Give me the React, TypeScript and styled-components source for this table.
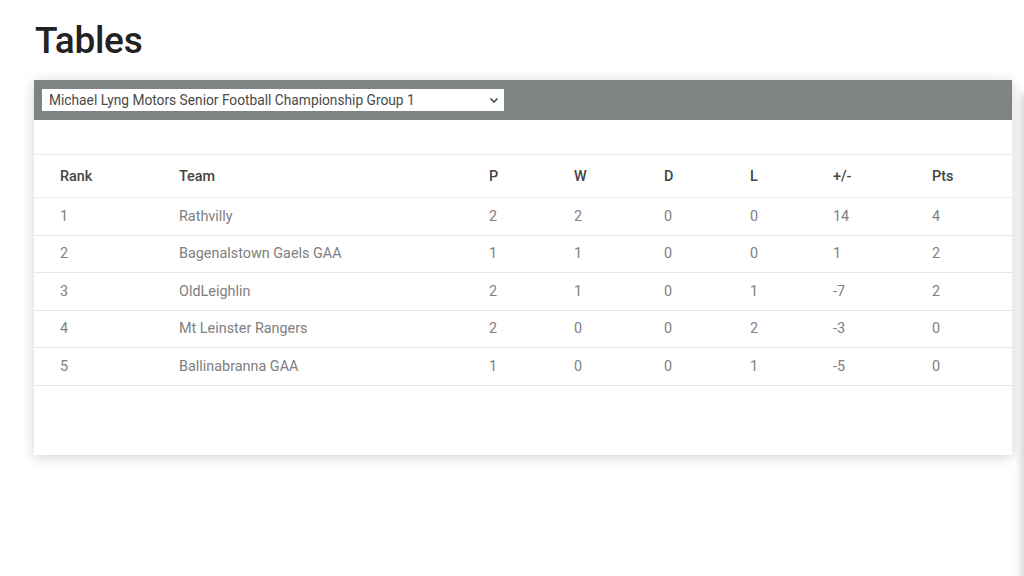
import { createGlobalStyle, styled } from "styled-components";

const GlobalStyle = createGlobalStyle`
  html, body {
    margin: 0;
    padding: 0;
    background: #ffffff;
    font-family: Roboto, "Liberation Sans", Arial, sans-serif;
  }
`;

const Page = styled.main`
  box-sizing: border-box;
  width: 1024px;
  height: 576px;
  padding: 18px 12px 0 34px;
  overflow: hidden;
  position: relative;
`;

const Title = styled.h1`
  margin: 0 0 16px 1px;
  font-size: 37px;
  line-height: 46px;
  font-weight: 500;
  color: #222222;
  letter-spacing: -0.3px;
`;

const Card = styled.section`
  width: 978px;
  height: 375px;
  background: #ffffff;
  box-shadow: 0 2px 12px rgba(0, 0, 0, 0.18);
`;

const FilterBar = styled.div`
  height: 40px;
  box-sizing: border-box;
  padding: 9px 8px;
  background: #7e8384;
`;

const SelectWrap = styled.div`
  position: relative;
  width: 462px;
  height: 22px;
`;

const Select = styled.select`
  appearance: none;
  width: 100%;
  height: 100%;
  margin: 0;
  padding: 0 24px 0 7px;
  border: none;
  border-radius: 0;
  background: #ffffff;
  color: #4a4a4a;
  font-family: Roboto, "Liberation Sans", Arial, sans-serif;
  font-size: 13.75px;
`;

const Chevron = styled.svg`
  position: absolute;
  right: 5px;
  top: 7px;
  width: 10px;
  height: 8px;
  pointer-events: none;
`;

const TableArea = styled.div`
  padding-top: 34px;
`;

const Table = styled.table`
  width: 100%;
  border-collapse: collapse;
  table-layout: fixed;
  border-top: 1px solid #e9e9e9;
`;

const HeadCell = styled.th`
  height: 42px;
  padding: 0 0 0 26px;
  text-align: left;
  font-size: 14.4px;
  font-weight: 500;
  color: #444444;
  border-bottom: 1px solid #ececec;
`;

const Cell = styled.td`
  height: 36.5px;
  padding: 0 0 0 26px;
  font-size: 14.4px;
  font-weight: 400;
  color: #808080;
  border-bottom: 1px solid #e6e6e6;
`;

const EdgeShadow = styled.div`
  position: absolute;
  top: 96px;
  bottom: -40px;
  right: -26px;
  width: 26px;
  box-shadow: 0 0 10px 2px rgba(0, 0, 0, 0.2);
`;

const columns = [119, 310, 85, 90, 86, 83, 99, 106];
const headings = ["Rank", "Team", "P", "W", "D", "L", "+/-", "Pts"];

const rows = [
  [1, "Rathvilly", 2, 2, 0, 0, 14, 4],
  [2, "Bagenalstown Gaels GAA", 1, 1, 0, 0, 1, 2],
  [3, "OldLeighlin", 2, 1, 0, 1, -7, 2],
  [4, "Mt Leinster Rangers", 2, 0, 0, 2, -3, 0],
  [5, "Ballinabranna GAA", 1, 0, 0, 1, -5, 0],
];

const App = () => (
  <>
    <GlobalStyle />
    <Page>
      <Title>Tables</Title>
      <Card>
        <FilterBar>
          <SelectWrap>
            <Select defaultValue="g1">
              <option value="g1">Michael Lyng Motors Senior Football Championship Group 1</option>
            </Select>
            <Chevron viewBox="0 0 10 8">
              <path d="M1.5 2.5 L5 6 L8.5 2.5" fill="none" stroke="#333" strokeWidth="1.4" />
            </Chevron>
          </SelectWrap>
        </FilterBar>
        <TableArea>
          <Table>
            <colgroup>
              {columns.map((w, i) => (
                <col key={i} style={{ width: w }} />
              ))}
            </colgroup>
            <thead>
              <tr>
                {headings.map((h) => (
                  <HeadCell key={h}>{h}</HeadCell>
                ))}
              </tr>
            </thead>
            <tbody>
              {rows.map((row) => (
                <tr key={row[0]}>
                  {row.map((value, i) => (
                    <Cell key={i}>{value}</Cell>
                  ))}
                </tr>
              ))}
            </tbody>
          </Table>
        </TableArea>
      </Card>
      <EdgeShadow />
    </Page>
  </>
);

export default App;
